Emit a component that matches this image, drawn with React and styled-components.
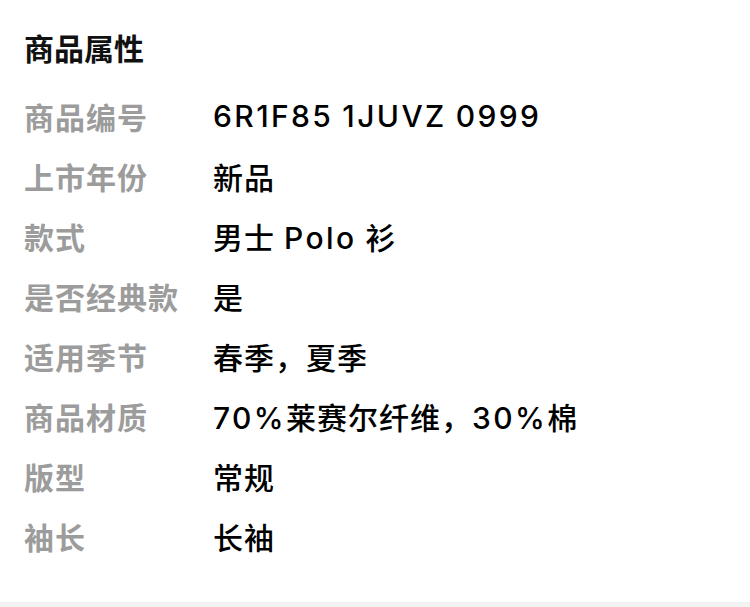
import React from 'react';
import styled, { createGlobalStyle } from 'styled-components';

const GlobalStyle = createGlobalStyle`
  html, body {
    margin: 0;
    padding: 0;
    background: #f2f2f2;
  }
  body {
    font-family: Inter, "Noto Sans CJK SC", "Noto Sans", sans-serif;
  }
`;

const Panel = styled.section`
  background: #fff;
  padding: 28px 24px 34px;
  height: 602px;
  box-sizing: border-box;
`;

const Title = styled.h2`
  margin: 0 0 16px;
  font-size: 30px;
  line-height: 42px;
  font-weight: 700;
  color: #111;
`;

const List = styled.dl`
  margin: 0;
  display: grid;
  grid-template-columns: 189px 1fr;
  grid-auto-rows: 60px;
  align-items: center;
`;

const Label = styled.dt`
  font-size: 30px;
  font-weight: 700;
  color: #9c9c9c;
  letter-spacing: 1px;
`;

const Value = styled.dd`
  margin: 0;
  font-size: 30px;
  font-weight: 500;
  color: #000;
  letter-spacing: 1px;
`;

// latin runs are set wider than the cjk ones
const Latin = styled.span`
  letter-spacing: 2.4px;
`;

const attrs = [
  ['商品编号', '6R1F85 1JUVZ 0999'],
  ['上市年份', '新品'],
  ['款式', '男士 Polo 衫'],
  ['是否经典款', '是'],
  ['适用季节', '春季，夏季'],
  ['商品材质', '70%莱赛尔纤维，30%棉'],
  ['版型', '常规'],
  ['袖长', '长袖'],
];

const renderValue = (text) =>
  text.split(/([\x21-\x7e]+)/).map((part, i) =>
    /[\x21-\x7e]/.test(part) ? <Latin key={i}>{part}</Latin> : part
  );

const App = () => {
  return (
    <>
      <GlobalStyle />
      <Panel>
        <Title>商品属性</Title>
        <List>
          {attrs.map(([k, v]) => (
            <React.Fragment key={k}>
              <Label>{k}</Label>
              <Value>{renderValue(v)}</Value>
            </React.Fragment>
          ))}
        </List>
      </Panel>
    </>
  );
};

export default App;
